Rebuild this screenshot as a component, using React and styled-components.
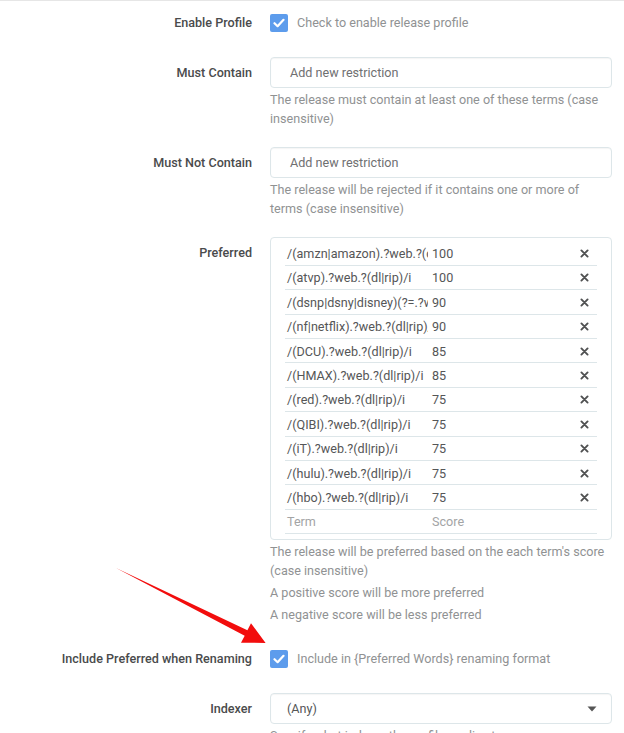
import React from "react";
import styled, { createGlobalStyle } from "styled-components";

const GlobalStyle = createGlobalStyle`
  html, body { margin: 0; padding: 0; background: #fff; }
  body { font-family: Roboto, "Noto Sans", "Liberation Sans", sans-serif; }
  * { box-sizing: border-box; }
`;

const Page = styled.div`
  position: relative;
  width: 624px;
  height: 733px;
  overflow: hidden;
  border-top: 1px solid #e6e6e6;
  padding-top: 6px;
`;

const FormGroup = styled.div`
  display: flex;
  align-items: flex-start;
  margin-bottom: 19px;
`;

const Label = styled.div`
  flex: none;
  width: 252px;
  margin-right: 18px;
  text-align: right;
  font-size: 12.6px;
  font-weight: 500;
  line-height: 31px;
  color: #4a4b4c;
  white-space: nowrap;
`;

const Field = styled.div`
  width: 342px;
  flex: none;
`;

const CheckRow = styled.div`
  display: flex;
  align-items: center;
  height: 31px;
  gap: 9px;
`;

const CheckBox = styled.span`
  display: inline-flex;
  align-items: center;
  justify-content: center;
  width: 18px;
  height: 18px;
  border-radius: 2px;
  background: #5d9cec;
`;

const CheckText = styled.span`
  font-size: 12.6px;
  color: #909293;
`;

const TextBox = styled.div`
  height: 31px;
  border: 1px solid #dde6e9;
  border-radius: 4px;
  box-shadow: inset 0 1px 1px rgba(0, 0, 0, 0.04);
  display: flex;
  align-items: center;
  padding-left: ${(p) => p.$pad || 19}px;
  padding-right: 14px;
  font-size: 12.6px;
  color: ${(p) => p.$color || "#6f7071"};
  justify-content: space-between;
`;

const Help = styled.div`
  margin-top: ${(p) => (p.$first ? 3 : 3.5)}px;
  font-size: 12.6px;
  line-height: 18.6px;
  color: #909293;
`;

const KVBox = styled.div`
  border: 1px solid #dde6e9;
  border-radius: 4px;
  padding: 3px 14px 5px 14px;
`;

const KVRow = styled.div`
  display: flex;
  align-items: center;
  height: 24.4px;
  padding-top: 1px;
  border-bottom: 1px solid #dde6e9;
  font-size: 12.6px;
  color: ${(p) => (p.$placeholder ? "#a3a4a5" : "#555657")};
`;

const Term = styled.span`
  flex: none;
  width: 143px;
  padding-left: 2px;
  overflow: hidden;
  white-space: nowrap;
`;

const Score = styled.span`
  flex: 1;
  padding-left: 4px;
  white-space: nowrap;
`;

const Remove = styled.span`
  flex: none;
  display: inline-flex;
  align-items: center;
  padding-right: 8px;
`;

const Arrow = styled.svg`
  position: absolute;
  left: 0;
  top: 0;
  pointer-events: none;
`;

const Check = () => (
  <svg width="12" height="10" viewBox="0 0 12 10">
    <path d="M1.5 5.2 L4.6 8.2 L10.5 1.8" fill="none" stroke="#fff" strokeWidth="2.2" strokeLinecap="round" strokeLinejoin="round" />
  </svg>
);

const Times = () => (
  <svg width="9" height="9" viewBox="0 0 9 9">
    <path d="M1.4 1.4 L7.6 7.6 M7.6 1.4 L1.4 7.6" stroke="#505152" strokeWidth="1.9" strokeLinecap="round" />
  </svg>
);

const Caret = () => (
  <svg width="10" height="6" viewBox="0 0 10 6">
    <path d="M0.5 0.5 L9.5 0.5 L5 5.5 Z" fill="#555" />
  </svg>
);

const preferred = [
  ["/(amzn|amazon).?web.?(dl|rip)/i", "100"],
  ["/(atvp).?web.?(dl|rip)/i", "100"],
  ["/(dsnp|dsny|disney)(?=.?web.?(dl|rip))/i", "90"],
  ["/(nf|netflix).?web.?(dl|rip)/i", "90"],
  ["/(DCU).?web.?(dl|rip)/i", "85"],
  ["/(HMAX).?web.?(dl|rip)/i", "85"],
  ["/(red).?web.?(dl|rip)/i", "75"],
  ["/(QIBI).?web.?(dl|rip)/i", "75"],
  ["/(iT).?web.?(dl|rip)/i", "75"],
  ["/(hulu).?web.?(dl|rip)/i", "75"],
  ["/(hbo).?web.?(dl|rip)/i", "75"],
];

export default function App() {
  return (
    <>
      <GlobalStyle />
      <Page>
        <FormGroup>
          <Label>Enable Profile</Label>
          <Field>
            <CheckRow>
              <CheckBox><Check /></CheckBox>
              <CheckText>Check to enable release profile</CheckText>
            </CheckRow>
          </Field>
        </FormGroup>

        <FormGroup>
          <Label>Must Contain</Label>
          <Field>
            <TextBox>Add new restriction</TextBox>
            <Help $first>The release must contain at least one of these terms (case insensitive)</Help>
          </Field>
        </FormGroup>

        <FormGroup>
          <Label>Must Not Contain</Label>
          <Field>
            <TextBox>Add new restriction</TextBox>
            <Help $first>The release will be rejected if it contains one or more of terms (case insensitive)</Help>
          </Field>
        </FormGroup>

        <FormGroup>
          <Label>Preferred</Label>
          <Field>
            <KVBox>
              {preferred.map(([t, s]) => (
                <KVRow key={t}>
                  <Term>{t}</Term>
                  <Score>{s}</Score>
                  <Remove><Times /></Remove>
                </KVRow>
              ))}
              <KVRow $placeholder>
                <Term>Term</Term>
                <Score>Score</Score>
              </KVRow>
            </KVBox>
            <Help $first>The release will be preferred based on the each term's score (case insensitive)</Help>
            <Help>A positive score will be more preferred</Help>
            <Help>A negative score will be less preferred</Help>
          </Field>
        </FormGroup>

        <FormGroup>
          <Label>Include Preferred when Renaming</Label>
          <Field>
            <CheckRow>
              <CheckBox><Check /></CheckBox>
              <CheckText>Include in {"{Preferred Words}"} renaming format</CheckText>
            </CheckRow>
          </Field>
        </FormGroup>

        <FormGroup>
          <Label>Indexer</Label>
          <Field>
            <TextBox $pad={16} $color="#555657">
              <span>(Any)</span>
              <Caret />
            </TextBox>
            <Help $first>Specify what indexer the profile applies to</Help>
          </Field>
        </FormGroup>

        <Arrow width="624" height="733" viewBox="0 0 624 733">
          <polygon
            points="116,567 247.4,629.3 251,622.2 265.6,641.9 241,641.8 244.7,634.7"
            fill="#f20d0d"
          />
        </Arrow>
      </Page>
    </>
  );
}
